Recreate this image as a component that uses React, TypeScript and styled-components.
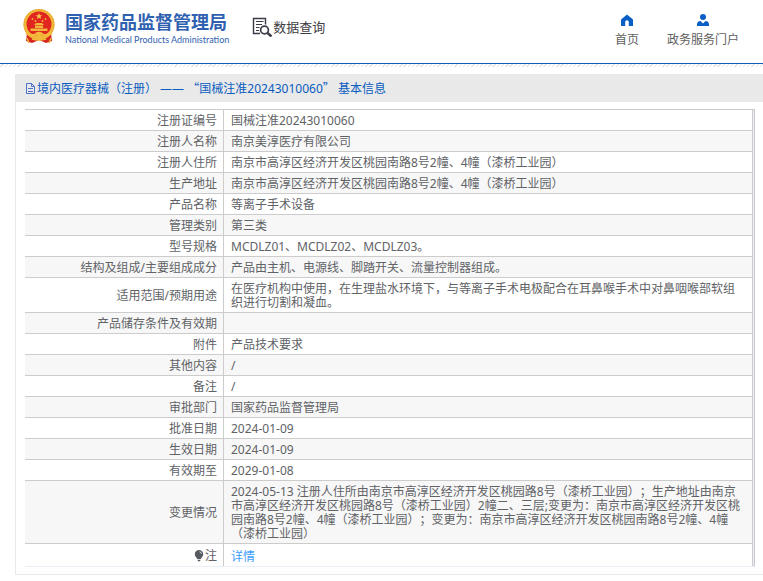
import React from 'react';
import styled, { createGlobalStyle } from 'styled-components';

const GlobalStyle = createGlobalStyle`
  * { box-sizing: border-box; }
  body {
    margin: 0;
    background: #fff;
    color: #606266;
    font-family: "Noto Sans", "Noto Sans CJK SC", sans-serif;
    font-size: 12px;
    line-height: 14px;
    text-spacing-trim: space-all;
  }
`;

const Header = styled.header`
  display: flex;
  align-items: flex-start;
  height: 64px;
  padding: 8px 24px 0 22px;
  border-bottom: 1px solid #0f5eb5;
`;

const Brand = styled.a`
  display: flex;
  gap: 9px;
  color: #2f61b0;
  text-decoration: none;
  white-space: nowrap;
`;

const BrandText = styled.span`
  display: flex;
  flex-direction: column;
  padding-top: 3px;
`;

const BrandName = styled.strong`
  font-size: 18px;
  line-height: 22px;
  font-weight: 700;
`;

const BrandEnglish = styled.span`
  font-family: Lato, sans-serif;
  font-size: 9px;
  line-height: 13px;
  font-weight: 400;
`;

const QueryHeading = styled.h1`
  display: flex;
  align-items: center;
  margin: 9px 0 0 23px;
  color: #3e3e44;
  font-size: 13px;
  line-height: 20px;
  font-weight: 400;
  white-space: nowrap;
`;

const Nav = styled.nav`
  display: flex;
  gap: 28px;
  margin: 6px 0 0 auto;
`;

const NavLink = styled.a`
  display: flex;
  flex-direction: column;
  align-items: center;
  gap: 7px;
  color: #606060;
  text-decoration: none;
  white-space: nowrap;
`;

const Hatch = styled.div`
  height: 3px;
  background: repeating-linear-gradient(135deg, #fff 0 2px, #e4e4e4 2px 3px);
`;

const Panel = styled.main`
  margin: 7px 0 6px 15px;
  padding-bottom: 7px;
  border-left: 1px solid #e9e9e9;
  border-bottom: 1px solid #e9e9e9;
`;

const PanelTitle = styled.h2`
  display: flex;
  align-items: center;
  gap: 1px;
  height: 28px;
  margin: 0 0 7px;
  padding: 1px 9px 0;
  background: #e9e9e9;
  color: #0a5cc0;
  font-size: 12px;
  font-weight: 400;
`;

const WideMark = styled.span`
  font-family: "Noto Sans CJK SC", sans-serif;
`;

const TableFrame = styled.div`
  margin: 0 8px 0 9px;
  padding-right: 1px;
  border-right: 1px solid #c8c9cc;
  border-top: 1px solid #ccc;
  border-bottom: 1px solid #ebeef5;
  background: #ebeef5;
`;

const Table = styled.table`
  width: 100%;
  border-collapse: separate;
  border-spacing: 0;
  background: #fff;

  tr:nth-child(even) { background: #f7f7f7; }
  tr:not(:last-child) > * { border-bottom: 1px solid #ccc; }
`;

const Label = styled.th`
  width: 199px;
  padding: 4px 6px 2px;
  border-right: 1px solid #ccc;
  font-weight: 400;
  text-align: right;
`;

const Value = styled.td`
  height: 21px;
  padding: 4px 6px 2px 7px;
  border-right: 1px solid #ccc;
`;

const NoteLabel = styled.span`
  display: inline-flex;
  align-items: center;
  vertical-align: top;
`;

const DetailLink = styled.a`
  display: block;
  padding: 2px 0 0;
  color: #409eff;
  text-decoration: none;
`;

const Emblem = () => (
  <svg width="34" height="36" viewBox="0 0 34 36" aria-hidden="true">
    <path d="M5 25L4 33l6 2 7-3 7 3 6-2-1-8z" fill="#d8241f" />
    <circle cx="17" cy="16.500" r="15.500" fill="#f0b93a" />
    <circle cx="17" cy="16.500" r="15" fill="none" stroke="#e5a02e" strokeWidth="1" strokeDasharray="2 1" />
    <circle cx="17" cy="16" r="12.500" fill="#e1261f" />
    <path d="M17 5l.9 2.200 2.400.1-1.900 1.500.7 2.300-2.100-1.300-2.100 1.300.7-2.300-1.900-1.500 2.400-.1z" fill="#f7ca4e" />
    <g fill="#f2b43c">
      <circle cx="10.500" cy="11" r=".9" />
      <circle cx="13.500" cy="13" r=".9" />
      <circle cx="20.500" cy="13" r=".9" />
      <circle cx="23.500" cy="11" r=".9" />
      <path d="M12 17l2-2h6l2 2zM13 17.500h8v2.500h-8zM8.500 20.500h17V23h-17z" />
    </g>
    <path d="M4 25q7 4 10 1 3-2 6 0 3 3 10-1" fill="none" stroke="#f2b93c" strokeWidth="2.400" />
    <circle cx="17" cy="28.500" r="3" fill="#f2b93c" />
    <path d="M10 31q7 2 14 0" fill="none" stroke="#f2b93c" strokeWidth="1.500" />
    <path d="M5 30l2 5M29 30l-2 5" stroke="#efb43a" strokeWidth="1.500" />
  </svg>
);

const SearchDocIcon = () => (
  <svg width="21" height="20" viewBox="0 0 21 20" fill="none" stroke="#3b3b49" aria-hidden="true">
    <path d="M8 16.500H1.500V1.500h12v6" strokeWidth="1.400" />
    <path d="M4 4.500h7.500M4 7.500h6M4 10.500h3.500M4 13.500h3" strokeWidth="1.200" />
    <circle cx="12.500" cy="13" r="3.900" strokeWidth="1.700" />
    <path d="M15.500 16l4 3.500" strokeWidth="2.400" />
  </svg>
);

const HomeIcon = () => (
  <svg width="12" height="12" viewBox="0 0 12 12" fill="#0a5fc4" aria-hidden="true">
    <path d="M6 0.500L0 5.500V12h4.200V8q0-1.800 1.800-1.800T7.800 8v4H12V5.500z" />
  </svg>
);

const UserIcon = () => (
  <svg width="12" height="12" viewBox="0 0 12 12" fill="#0a5fc4" aria-hidden="true">
    <circle cx="6" cy="3" r="3" />
    <path d="M0 12V10Q.5 7.200 3.500 7L6 9.500 8.500 7Q11.500 7.200 12 10v2z" />
  </svg>
);

const DocIcon = () => (
  <svg width="11" height="12" viewBox="0 0 11 12" fill="none" stroke="#4b72c8" aria-hidden="true">
    <path d="M1.500 .5h5l3 3v7h-8zM6.500 .5v3h3M3 5.500h5M3 8.500h5" />
  </svg>
);

const BulbIcon = () => (
  <svg width="11" height="12" viewBox="0 0 11 12" aria-hidden="true">
    <path d="M5 0a4.200 4.200 0 0 1 4.200 4.200c0 2.300-1.700 3-2.400 4.800H3.200C2.500 7.200.8 6.500.8 4.200A4.200 4.200 0 0 1 5 0zM3.500 9.800h3L6 11.300H4z" fill="#555a60" />
    <path d="M5.500 1.800q1.800.3 1.900 2" fill="none" stroke="#fff" strokeWidth=".8" />
  </svg>
);

const rows: [string, string][] = [
  ['注册证编号', '国械注准20243010060'],
  ['注册人名称', '南京美淳医疗有限公司'],
  ['注册人住所', '南京市高淳区经济开发区桃园南路8号2幢、4幢（漆桥工业园）'],
  ['生产地址', '南京市高淳区经济开发区桃园南路8号2幢、4幢（漆桥工业园）'],
  ['产品名称', '等离子手术设备'],
  ['管理类别', '第三类'],
  ['型号规格', 'MCDLZ01、MCDLZ02、MCDLZ03。'],
  ['结构及组成/主要组成成分', '产品由主机、电源线、脚踏开关、流量控制器组成。'],
  ['适用范围/预期用途', '在医疗机构中使用，在生理盐水环境下，与等离子手术电极配合在耳鼻喉手术中对鼻咽喉部软组织进行切割和凝血。'],
  ['产品储存条件及有效期', ''],
  ['附件', '产品技术要求'],
  ['其他内容', '/'],
  ['备注', '/'],
  ['审批部门', '国家药品监督管理局'],
  ['批准日期', '2024-01-09'],
  ['生效日期', '2024-01-09'],
  ['有效期至', '2029-01-08'],
  ['变更情况', '2024-05-13 注册人住所由南京市高淳区经济开发区桃园路8号（漆桥工业园）；生产地址由南京市高淳区经济开发区桃园路8号（漆桥工业园）2幢二、三层;变更为：南京市高淳区经济开发区桃园南路8号2幢、4幢（漆桥工业园）；变更为：南京市高淳区经济开发区桃园南路8号2幢、4幢（漆桥工业园）'],
];

export default function App() {
  return (
    <>
      <GlobalStyle />
      <Header>
        <Brand href="#">
          <Emblem />
          <BrandText>
            <BrandName>国家药品监督管理局</BrandName>
            <BrandEnglish>National Medical Products Administration</BrandEnglish>
          </BrandText>
        </Brand>
        <QueryHeading><SearchDocIcon />数据查询</QueryHeading>
        <Nav>
          <NavLink href="#"><HomeIcon />首页</NavLink>
          <NavLink href="#"><UserIcon />政务服务门户</NavLink>
        </Nav>
      </Header>
      <Hatch />
      <Panel>
        <PanelTitle>
          <DocIcon />
          <span lang="zh-CN">
            境内医疗器械（注册） —— <WideMark>“</WideMark>国械注准20243010060<WideMark>”</WideMark> 基本信息
          </span>
        </PanelTitle>
        <TableFrame>
          <Table>
            <tbody>
              {rows.map(([label, value]) => (
                <tr key={label}>
                  <Label scope="row">{label}</Label>
                  <Value>{value}</Value>
                </tr>
              ))}
              <tr>
                <Label scope="row"><NoteLabel><BulbIcon />注</NoteLabel></Label>
                <Value><DetailLink href="#">详情</DetailLink></Value>
              </tr>
            </tbody>
          </Table>
        </TableFrame>
      </Panel>
    </>
  );
}
